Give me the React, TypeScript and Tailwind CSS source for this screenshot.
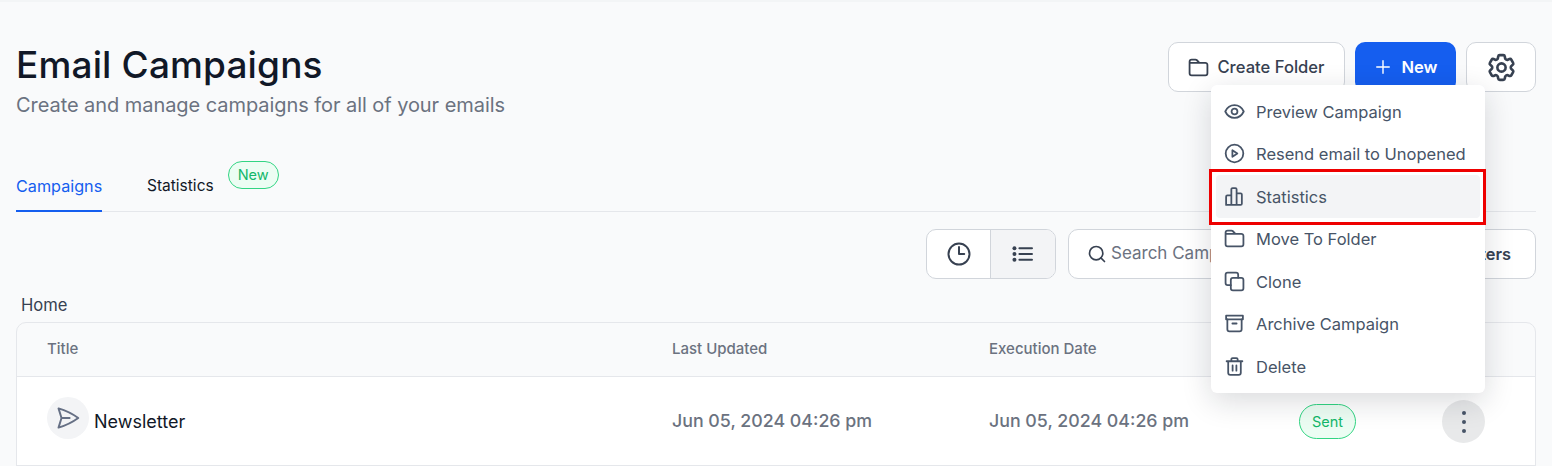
import React from "react";
import { Search } from "lucide-react";
import { HiOutlineCog6Tooth, HiOutlinePlus, HiOutlinePaperAirplane, HiOutlineClock } from "react-icons/hi2";

type P = { className?: string };
const Svg = ({ className, children }: P & { children: React.ReactNode }) => (
  <svg viewBox="0 0 20 20" fill="none" stroke="currentColor" strokeWidth="1.7" strokeLinecap="round" strokeLinejoin="round" className={className}>
    {children}
  </svg>
);

const Eye = (p: P) => (
  <Svg {...p}>
    <path d="M1.2 10C3 6.2 6.2 4 10 4s7 2.2 8.8 6c-1.8 3.8-5 6-8.8 6s-7-2.2-8.800-6Z" />
    <circle cx="10" cy="10" r="2.8" />
  </Svg>
);
const Play = (p: P) => (
  <Svg {...p}>
    <circle cx="10" cy="10" r="8.400" />
    <path d="M8 6.900v6.200l4.700-3.100L8 6.900Z" />
  </Svg>
);
const Chart = (p: P) => (
  <Svg {...p}>
    <path d="M2 18V10.200C2 9.500 2.500 9 3.200 9H7M7 18V3.200C7 2.500 7.500 2 8.200 2h2.600c.7 0 1.200.5 1.200 1.200V18M12 7h3.800c.7 0 1.200.5 1.200 1.200V16.800c0 .7-.5 1.200-1.200 1.200H3.200C2.500 18 2 17.500 2 16.800" />
  </Svg>
);
const Folder = (p: P) => (
  <Svg {...p}>
    <path d="M1.500 5V15.500c0 1.100.9 2 2 2h13c1.100 0 2-.9 2-2V7.500c0-1.100-.9-2-2-2H1.800M1.500 5V4.500c0-1.100.9-2 2-2h3.600c.5 0 1 .2 1.400.6l2.400 2.400" />
  </Svg>
);
const Clone = (p: P) => (
  <Svg {...p}>
    <rect x="6.500" y="6.500" width="12" height="12" rx="2" />
    <path d="M6.500 13.500H3.500c-1.100 0-2-.9-2-2V3.500c0-1.100.9-2 2-2h8c1.100 0 2 .9 2 2v3" />
  </Svg>
);
const Archive = (p: P) => (
  <Svg {...p}>
    <path d="M2 2.500h16V6H2V2.500Z" />
    <path d="M3.200 6v9.500c0 1.100.9 2 2 2h9.600c1.100 0 2-.9 2-2V6M8 10h4" />
  </Svg>
);
const Trash = (p: P) => (
  <Svg {...p}>
    <path d="M2.500 5h15M7 5V3.200C7 2.500 7.500 2 8.200 2h3.600c.7 0 1.200.5 1.200 1.200V5M4 5v11c0 1.100.9 2 2 2h8c1.100 0 2-.9 2-2V5M8.200 9v5M11.800 9v5" />
  </Svg>
);
const ListIcon = (p: P) => (
  <svg viewBox="0 0 24 20" className={p.className}>
    <path d="M8 3.500h14M8 10h14M8 16.500h14" stroke="currentColor" strokeWidth="2.200" strokeLinecap="round" fill="none" />
    <circle cx="2.500" cy="3.500" r="2.200" fill="currentColor" />
    <circle cx="2.500" cy="10" r="2.200" fill="currentColor" />
    <circle cx="2.500" cy="16.500" r="2.200" fill="currentColor" />
  </svg>
);

const menu = [
  { label: "Preview Campaign", Icon: Eye },
  { label: "Resend email to Unopened", Icon: Play },
  { label: "Statistics", Icon: Chart, active: true },
  { label: "Move To Folder", Icon: Folder },
  { label: "Clone", Icon: Clone },
  { label: "Archive Campaign", Icon: Archive },
  { label: "Delete", Icon: Trash },
];

export default function App() {
  return (
    <div className="relative h-[466px] w-[1552px] overflow-hidden bg-[#f9fafb] px-4 font-['Inter',sans-serif] text-[#111827]">
      <div className="-mx-4 h-[2px] bg-[#f3f5f6]" />
      <header className="mt-[40px] flex items-start justify-between">
        <div>
          <h1 className="text-[37px] leading-[46px] font-medium tracking-[0.15px] text-[#111827]">Email Campaigns</h1>
          <p className="mt-[3px] text-[20px] leading-[28px] tracking-[-0.06px] text-[#6b7280]">Create and manage campaigns for all of your emails</p>
        </div>
        <div className="flex gap-[10px]">
          <button className="flex h-[50px] w-[177px] items-center justify-center gap-[8px] rounded-[10px] border border-[#d1d5db] bg-white text-[16.6px] font-medium text-[#374151]">
            <Folder className="h-[21px] w-[21px]" />
            Create Folder
          </button>
          <button className="flex h-[50px] w-[101px] items-center justify-center gap-[8px] rounded-[10px] bg-[#155eef] text-[16.6px] font-semibold text-white">
            <HiOutlinePlus className="h-[20px] w-[20px]" strokeWidth={1.7} />
            New
          </button>
          <button className="flex h-[50px] w-[70px] items-center justify-center rounded-[10px] border border-[#d1d5db] bg-white text-[#374151]">
            <HiOutlineCog6Tooth className="h-[33px] w-[33px]" strokeWidth={1.9} />
          </button>
        </div>
      </header>

      <nav className="mt-[46px] flex h-[47px] items-start border-b border-[#e5e7eb] text-[16px]">
        <div className="mt-[11px] h-[36px] w-[86px] border-b-2 border-[#155eef] text-[16.2px] leading-[20px] text-[#155eef]">Campaigns</div>
        <div className="ml-[45px] mt-[11px] text-[15.5px] leading-[20px] text-[#111827]">Statistics</div>
        <span className="ml-[14px] -mt-[4px] flex h-[28px] w-[51px] items-center justify-center rounded-full border border-[#32d583] bg-[#ecfdf3] text-[14.5px] text-[#12b76a]">New</span>
      </nav>

      <div className="mt-[17px] flex justify-end gap-[12px]">
        <div className="flex h-[50px] w-[130px] overflow-hidden rounded-[10px] border border-[#d1d5db] bg-white text-[#374151]">
          <div className="flex w-[64px] items-center justify-center border-r border-[#d1d5db]">
            <HiOutlineClock className="h-[28px] w-[28px]" strokeWidth={1.7} />
          </div>
          <div className="flex flex-1 items-center justify-center bg-[#f3f4f6]">
            <ListIcon className="h-[18px] w-[22px]" />
          </div>
        </div>
        <div className="flex h-[50px] w-[468px] items-center justify-between rounded-[10px] border border-[#d1d5db] bg-white pl-[18px] pr-[24px]">
          <div className="flex items-center gap-[4px] text-[17px] text-[#6b7280]">
            <Search className="h-[20px] w-[20px] text-[#374151]" strokeWidth={2} />
            Search Campaigns
          </div>
          <span className="text-[16.4px] font-semibold text-[#374151]">Filters</span>
        </div>
      </div>

      <div className="ml-[5px] mt-[16px] text-[16.6px] leading-[20px] text-[#374151]">Home</div>

      <div className="mt-[7px] h-[200px] overflow-hidden rounded-t-[10px] border border-[#e5e7eb]">
        <div className="grid h-[54px] grid-cols-[625px_317px_1fr] items-center border-b border-[#e5e7eb] pl-[30px] text-[15px] font-medium text-[#6b7280]">
          <span>Title</span>
          <span>Last Updated</span>
          <span>Execution Date</span>
        </div>
        <div className="grid h-[89px] grid-cols-[625px_317px_310px_143px_1fr] items-center border-b border-[#e5e7eb] bg-white pl-[30px] pt-[1px]">
          <div className="flex items-center gap-[5px]">
            <span className="-mt-[7px] flex h-[42px] w-[42px] items-center justify-center rounded-full bg-[#f3f4f6] text-[#667085]">
              <HiOutlinePaperAirplane className="h-[26px] w-[26px]" strokeWidth={1.8} />
            </span>
            <span className="text-[18px] text-[#111827]">Newsletter</span>
          </div>
          <span className="text-[17.8px] font-medium text-[#6b7280]">Jun 05, 2024 04:26 pm</span>
          <span className="text-[17.8px] font-medium text-[#6b7280]">Jun 05, 2024 04:26 pm</span>
          <span className="flex h-[35px] w-[57px] items-center justify-center rounded-full border border-[#32d583] bg-[#ecfdf3] text-[14.5px] text-[#12b76a]">Sent</span>
          <span className="flex h-[43px] w-[43px] flex-col items-center justify-center gap-[5px] rounded-full bg-[#e8e9ea]">
            <span className="h-[4px] w-[4px] rounded-full bg-[#475467]" />
            <span className="h-[4px] w-[4px] rounded-full bg-[#475467]" />
            <span className="h-[4px] w-[4px] rounded-full bg-[#475467]" />
          </span>
        </div>
      </div>

      <div className="absolute left-[1211px] top-[85px] w-[274px] rounded-[6px] bg-white p-[5px] shadow-[0_8px_30px_rgba(16,24,40,0.16)]">
        {menu.map(({ label, Icon, active }) => (
          <div
            key={label}
            className={`flex h-[42.500px] items-center gap-[11px] rounded-[4px] pl-[8px] text-[16.500px] text-[#475467] ${active ? "bg-[#f3f4f6]" : ""}`}
          >
            <Icon className="h-[21px] w-[21px] shrink-0 text-[#475467]" />
            <span className="mt-[2px]">{label}</span>
          </div>
        ))}
      </div>
      <div className="absolute left-[1209px] top-[169px] h-[56px] w-[277px] border-[3px] border-[#ee0000]" />
    </div>
  );
}
